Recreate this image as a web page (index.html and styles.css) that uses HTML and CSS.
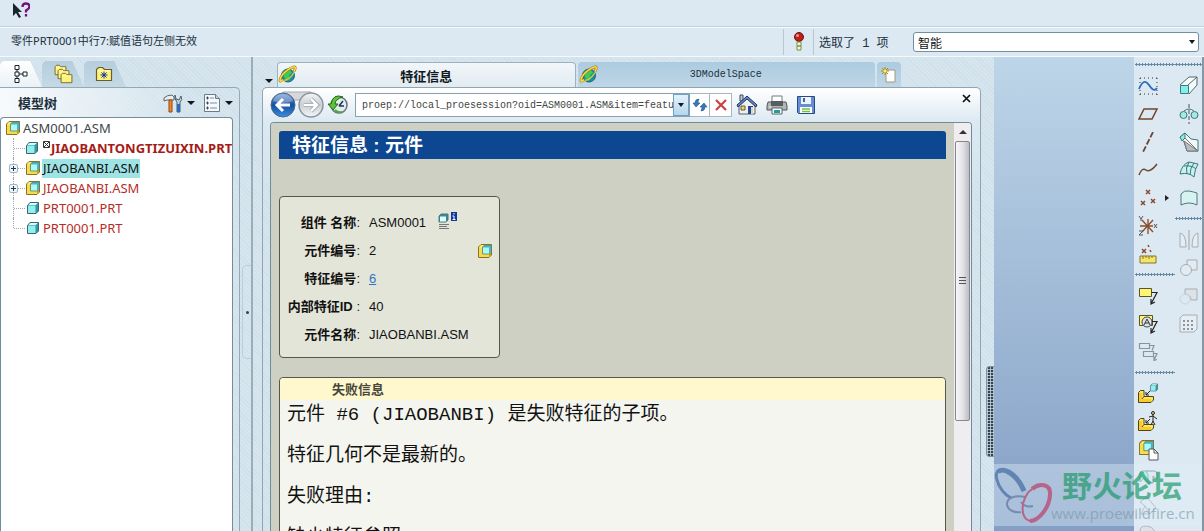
FILE: index.html
```html
<!DOCTYPE html>
<html lang="zh-CN">
<head>
<meta charset="utf-8">
<title>特征信息</title>
<link rel="stylesheet" href="styles.css">
</head>
<body>
<svg class="defs" aria-hidden="true">
  <symbol id="part" viewBox="0 0 14 14"><path d="M1.5 4.5 4 1.5h8.500v8.500L10 12.500H1.500z" fill="#2f97a5" stroke="#43636c"/><path d="M2 4.500h7.500V12H2z" fill="#8ff0ee"/><path d="M2.500 4 4.300 2h7.500L9.700 4z" fill="#d3ffff"/></symbol>
  <symbol id="asm" viewBox="0 0 16 16"><path d="M1.500 4 4 1.500h10.500V12L12 14.500H1.500z" fill="#ffef7a" stroke="#8c7220"/><path d="M2 4.500h3.500v6.500h6.500v3H2z" fill="#f4dc4c"/><path d="M5.500 4 7.500 2h7v6.500l-2 2.500h-7z" fill="#48b6c8" stroke="#6a774a" stroke-width=".7"/><path d="M6 4.500h6v6H6z" fill="#aafafa"/><path d="M12 14V11l2-2v3z" fill="#c09d28"/></symbol>
  <symbol id="globe" viewBox="0 0 20 20"><circle cx="10" cy="10.500" r="6.500" fill="#1c8fa2" stroke="#176573"/><path d="M6 7q3-3 6-2l2 3-3 2 1 4-3 2-3-4z" fill="#3fca55"/><path d="M5 14.500C0 20 1 11 9 5.500S19 1 16 6.500" fill="none" stroke="#9d7b13" stroke-width="2.600"/><path d="M5 14.500C0 20 1 11 9 5.500S19 1 16 6.500" fill="none" stroke="#ffdf45" stroke-width="1.500"/><path d="M6 15.500q6-1 10-8" fill="none" stroke="#e9c63c" stroke-width="1.300"/></symbol>
  <symbol id="folder" viewBox="0 0 18 16"><path d="M1.500 14.500V3.500l2-2h4l2 2h7v11z" fill="#fff27a" stroke="#675f2b" stroke-width="1.200"/><path d="M2.500 5h13" stroke="#fffbd0"/></symbol>
  <symbol id="elbow" viewBox="0 0 20 20"><path d="M1.500 8.500 3.500 6.500h3.500v6h9.500v3.500l-2.500 2.500H1.500z" fill="#ffe35a" stroke="#4f4414"/><path d="M2 9h3v6h9v3H2z" fill="#f7cb2d"/><path d="m5 15 2-2.500" stroke="#5b4c14"/></symbol>
</svg>

<header class="help-bar"><button class="plain" aria-label="上下文帮助"><svg width="20" height="20"><path d="M3 2v13l3-3 3 5 2-1-3-5h4z" fill="#17242b"/><path d="M12.500 6q0-3.500 3.500-3.500t3.500 3q0 2-3.500 4v2M16 13v2.500" fill="none" stroke="#74127b" stroke-width="2.300"/></svg></button></header>

<section class="message-bar">
  <p class="message">零件PRT0001中行7:赋值语句左侧无效</p>
  <span class="light"><svg width="12" height="20"><circle cx="6" cy="5" r="4.500" fill="#bd2018" stroke="#6c140f"/><circle cx="4.500" cy="3.500" r="1.500" fill="#f4948c"/><path d="M4 10h4v4H4zM4 14h4v4H4z" fill="#f2f5cf" stroke="#769448"/></svg></span>
  <label class="picked" for="filter">选取了 1 项</label>
  <div class="filter"><select id="filter"><option>智能</option></select><i class="down"></i></div>
</section>

<main class="workspace">
  <aside class="navigator">
    <nav class="nav-tabs">
      <button class="nav-tab active" aria-label="模型树"><svg width="20" height="20"><path d="M4 1.500h4v4H4zM4 8h4v4H4zM4 14.500h4v4H4zM12 8h4v4h-4zM6 5.500V8m0 4v2.500M8 10h4" fill="#fff" stroke="#17202a"/></svg></button>
      <button class="nav-tab" aria-label="文件夹浏览器"><svg width="21" height="20"><use href="#folder" x="1" y="0" width="13" height="12"/><use href="#folder" x="4" y="4" width="13" height="12"/><use href="#folder" x="7" y="8" width="13" height="12"/></svg></button>
      <button class="nav-tab" aria-label="收藏夹"><svg width="19" height="17"><use href="#folder" width="18" height="16"/><path d="M9 5.500v7M5.500 9h7M6.500 6.500l5 5m0-5-5 5" stroke="#17349c"/></svg></button>
    </nav>
    <div class="nav-panel">
      <div class="nav-head">
        <h2>模型树</h2>
        <button class="plain menu" aria-label="设置"><svg width="20" height="20"><path d="M1 5q3-3 8-3l2 2v3H4L1 8z" fill="#e8edf0" stroke="#5a666c"/><path d="M6 7h3v12H6z" fill="#f08a29" stroke="#934312"/><path d="m12 2 1 4 3 1 2-4q2 4-1 6v10h-3V9q-3-3-2-7" fill="#cbd8df" stroke="#4a5c68"/><path d="M14 11h3v8h-3z" fill="#286cc0"/></svg><i class="down"></i></button>
        <button class="plain menu" aria-label="显示"><svg width="18" height="20"><path d="M1.500 1.500h11l4 4v13h-15z" fill="#f6f9fb" stroke="#6c7b86"/><path d="M12.500 1.500v4h4" fill="#bdd1db" stroke="#6c7b86"/><path d="M7 5h4M7 10h7M7 15h7" stroke="#7590a5"/><path d="M4 4h1v2H4zM4 9h1v2H4zM4 14h1v2H4z" stroke="#405465"/></svg><i class="down"></i></button>
      </div>
      <ul class="tree">
        <li class="root"><svg width="16" height="16"><use href="#asm"/></svg><span>ASM0001.ASM</span></li>
        <li class="failed"><i class="branch"></i><svg width="14" height="14"><use href="#part"/></svg><svg class="mark" width="8" height="8"><path d="M.5.500h6v6h-6zM1 1l5 5m0-5-5 5" fill="none" stroke="#333"/></svg><span>JIAOBANTONGTIZUIXIN.PRT</span></li>
        <li class="picked-row"><i class="branch"></i><button class="plus" aria-label="展开"></button><svg width="16" height="16"><use href="#asm"/></svg><span>JIAOBANBI.ASM</span></li>
        <li><i class="branch"></i><button class="plus" aria-label="展开"></button><svg width="16" height="16"><use href="#asm"/></svg><span>JIAOBANBI.ASM</span></li>
        <li><i class="branch"></i><svg width="16" height="14"><use href="#part"/></svg><span>PRT0001.PRT</span></li>
        <li class="last"><i class="branch"></i><svg width="16" height="14"><use href="#part"/></svg><span>PRT0001.PRT</span></li>
      </ul>
    </div>
    <div class="grip"></div>
  </aside>

  <section class="browser">
    <div class="tabs">
      <button class="plain tab-menu" aria-label="选项卡"><i class="down"></i></button>
      <button class="tab active"><svg width="20" height="20"><use href="#globe"/></svg><span>特征信息</span></button>
      <button class="tab"><svg width="20" height="20"><use href="#globe"/></svg><span class="mono">3DModelSpace</span></button>
      <button class="tab new" aria-label="新选项卡"><svg width="16" height="16"><path d="M5 3h9v12H5z" fill="#fff" stroke="#9c9a80"/><path d="M4 0v8M0 4h8M1 1l6 6m0-6L1 7" stroke="#b18909"/><circle cx="4" cy="4" r="1.500" fill="#ffee60"/></svg></button>
    </div>
    <div class="page-shell">
      <div class="address-row">
        <button class="plain" aria-label="后退和前进"><svg width="56" height="28"><path d="M14 1h28v8H14z" fill="#d4d8da" stroke="#a4abb0"/><circle cx="14" cy="14" r="12" fill="url(#blue)" stroke="#53698a"/><circle cx="42" cy="14" r="12" fill="url(#grey)" stroke="#8c959f" stroke-width="1.500"/><path d="M4 10q2-7 10-7t10 7q-9 4-20 0" fill="#fff" opacity=".3"/><path d="m14 8-6 6 6 6M9 14h12" fill="none" stroke="#fff" stroke-width="3"/><path d="m42 8 6 6-6 6M35 14h12" fill="none" stroke="#929ba2" stroke-width="4"/><path d="m42 8 6 6-6 6M35 14h12" fill="none" stroke="#fff" stroke-width="2.500"/><defs><linearGradient id="blue" x2="0" y2="1"><stop stop-color="#719bd5"/><stop offset=".5" stop-color="#164f9f"/><stop offset="1" stop-color="#398de0"/></linearGradient><linearGradient id="grey" x2="0" y2="1"><stop stop-color="#f6f6f6"/><stop offset=".5" stop-color="#c8ced2"/><stop offset="1" stop-color="#f6f8f9"/></linearGradient></defs></svg></button>
        <button class="plain" aria-label="历史记录"><svg width="22" height="22"><circle cx="12" cy="11" r="8" fill="#e3ebef" stroke="#66737b" stroke-width="1.500"/><path d="m12 12 4-5M12 12h5" stroke="#17394a" stroke-width="1.500"/><path d="M16 3Q6-1 4 10H1l5 6 5-6H8q0-5 8-7" fill="#5cc535" stroke="#21681f"/><path d="M8 16q3 3 7 2" fill="none" stroke="#4ca93b" stroke-width="2"/></svg></button>
        <form class="address"><input aria-label="地址" value="proep://local_proesession?oid=ASM0001.ASM&amp;item=featureinfo"><button type="button" class="drop" aria-label="地址列表"><i class="down"></i></button></form>
        <button class="box" aria-label="刷新"><svg width="16" height="16"><path d="M7 2Q3 2 3 6H1l3 4 4-4H6q0-2 1-4M9 14q4 0 4-4h2l-3-4-4 4h2q0 2-1 4" fill="#3878bb" stroke="#25588d" stroke-width=".6"/></svg></button>
        <button class="box" aria-label="停止"><svg width="14" height="14"><path d="m2 2 10 10M12 2 2 12" stroke="#c74346" stroke-width="2.200"/></svg></button>
        <span class="tools">
          <button class="plain" aria-label="主页"><svg width="22" height="22"><path d="M4 1h3v6H4z" fill="#c2cbd4" stroke="#344a78"/><path d="M3 11 11 4l8 7v9H3z" fill="#eff0ed" stroke="#59636d"/><path d="m1 11 10-9 10 9-1 2-9-8-9 8z" fill="#6884c4" stroke="#20345f"/><path d="M12 12h5v8h-5z" fill="#21479a"/><path d="M5 12h4v4H5z" fill="#ecd66a" stroke="#5e5a40"/><path d="M15 13h2v7h-2z" fill="#e1d5ae"/></svg></button>
          <button class="plain" aria-label="打印"><svg width="22" height="22"><path d="M6 2h10v8H6z" fill="#fff" stroke="#747c80"/><path d="M2 8h18l1 4v4H1v-4z" fill="#b4b6b4" stroke="#505659"/><path d="M5 7h12v5H5z" fill="#575c60"/><path d="M6 14h10v6H6z" fill="#fff" stroke="#4a6668"/><path d="M8 16h6v3H8z" fill="#249c9f"/><path d="M3 13h2" stroke="#eee"/></svg></button>
          <button class="plain" aria-label="保存"><svg width="20" height="20"><path d="M1.500 1.500h17v17h-16l-1-1z" fill="#648fd4" stroke="#284983"/><path d="M5 2h10v7H5z" fill="#edf3fa"/><path d="M7 3h2v4H7z" fill="#4265a0"/><path d="M4 12h12v6H4z" fill="#fff"/><path d="M6 14h8m-8 2.500h8" stroke="#75be40" stroke-width="1.500"/></svg></button>
        </span>
        <button class="plain close" aria-label="关闭"><svg width="10" height="10"><path d="m1 1 7 7m0-7L1 8" stroke="#111" stroke-width="1.700"/></svg></button>
      </div>
      <div class="viewport">
        <article class="document">
          <h1>特征信息 : 元件</h1>
          <div class="info">
            <table>
              <tr><th>组件 名称<b>:</b></th><td>ASM0001 <svg class="info-icon" width="20" height="20"><path d="M1 5 3 3h7v6l-2 2H1z" fill="#408694" stroke="#51767e"/><path d="M2 5.500h6v5H2z" fill="#dcffff"/><path d="M1 13.500h10M1 15.500h8M1 17.500h10" stroke="#777"/><path d="M13 1h6v9h-6z" fill="#12389a"/><path d="M16 2v1.500M14.500 5H16v3.500m-1.500 0h3" fill="none" stroke="#fff"/></svg></td></tr>
              <tr><th>元件编号<b>:</b></th><td><span class="with-icon">2<svg width="16" height="16"><use href="#asm"/></svg></span></td></tr>
              <tr><th>特征编号<b>:</b></th><td><a href="#feature">6</a></td></tr>
              <tr><th>内部特征ID <b>:</b></th><td>40</td></tr>
              <tr><th>元件名称<b>:</b></th><td>JIAOBANBI.ASM</td></tr>
            </table>
          </div>
          <section class="failure" id="feature">
            <h2>失败信息</h2>
            <p>元件 #6 (JIAOBANBI) 是失败特征的子项。</p>
            <p>特征几何不是最新的。</p>
            <p>失败理由:</p>
            <p>缺少特征参照。</p>
          </section>
        </article>
        <div class="scroll"><i class="up"></i><div class="thumb"><i></i></div></div>
      </div>
    </div>
    <div class="dot-grip"></div>
  </section>

  <section class="canvas"></section>

  <aside class="toolbars">
    <div class="col">
      <hr>
      <button class="plain" aria-label="草绘"><svg width="20" height="20"><path d="M2 2h18M2 18h18M2 2v18M19 2v18" fill="none" stroke="#333" stroke-dasharray="1 3"/><path d="M1 13q5-12 10-4t8 3" fill="none" stroke="#2a6db9" stroke-width="1.800"/></svg></button>
      <button class="plain" aria-label="平面"><svg width="20" height="20"><path d="M6 5h13l-5 10H1z" fill="none" stroke="#70452e" stroke-width="1.500"/></svg></button>
      <button class="plain" aria-label="轴"><svg width="20" height="20"><path d="M15 0 5 20" stroke="#70452e" stroke-width="1.800" stroke-dasharray="6 2"/></svg></button>
      <button class="plain" aria-label="曲线"><svg width="20" height="20"><path d="M1 15q3-8 7-5t11-6" fill="none" stroke="#70452e" stroke-width="1.500"/></svg></button>
      <button class="plain" aria-label="点"><svg width="20" height="20"><path d="m8 2 4 4m0-4L8 6M3 13l4 4m0-4-4 4m10-6 4 4m0-4-4 4" stroke="#8a4b28" stroke-width="1.500"/></svg><i class="fly"></i></button>
      <button class="plain" aria-label="坐标系"><svg width="20" height="20"><path d="M10 3v15M2 10h13M4 4l11 12M15 4 4 16" stroke="#8a4b28" stroke-width="1.300"/><path d="m1 0 2 3 2-3M3 3v2M16 8l3 4m0-4-3 4M1 15h4l-4 4h4" fill="none" stroke="#555"/></svg></button>
      <button class="plain" aria-label="分析"><svg width="20" height="20"><path d="m4 5 4 4m0-4L4 9m6-8 1 2m1 3 1 2" stroke="#8a4b28" stroke-width="1.500"/><path d="M2 12h16v7H2z" fill="#f5e567" stroke="#81752e"/><path d="M5 12v3m3-3v2m3-2v3m3-3v2" stroke="#81752e"/></svg></button>
      <hr>
      <button class="plain" aria-label="注释"><svg width="20" height="20"><path d="M1.500 2.500h12v8h-12z" fill="#fff477" stroke="#575722"/><path d="M14 6.500h5L13 18m0-5v5l4-2" fill="none" stroke="#222" stroke-width="1.200"/></svg></button>
      <button class="plain" aria-label="传播注释"><svg width="20" height="20"><path d="M1.500 1.500h13v10h-13z" fill="#fff477" stroke="#575722"/><circle cx="9" cy="8" r="5" fill="#dce4e8" stroke="#454545"/><path d="m6 11 3-6 3 6M7 9h4" fill="none" stroke="#333"/><path d="M14 7.500h5L13 19m0-5v5l4-2" fill="none" stroke="#222" stroke-width="1.200"/></svg></button>
      <button class="plain" aria-label="注释元素"><svg width="20" height="20"><path d="M1.500 1.500h10v5h-10zM5.500 9.500h10v5h-10zM11 3.500h5l-2 5m1 3h4l-3 7m0-4v4l3-1" fill="none" stroke="#89949b" stroke-width="1.200"/></svg></button>
      <hr>
      <button class="plain" aria-label="装配"><svg width="22" height="22"><use href="#elbow" y="1" width="20" height="20"/><use href="#part" x="12" y="0" width="10" height="9"/><path d="m13 8-4 4m0-3v3h3" fill="none" stroke="#222"/></svg></button>
      <button class="plain" aria-label="人体模型"><svg width="22" height="22"><use href="#elbow" y="1" width="20" height="20"/><path d="M16 3v7l-2 4m2-4 2 4m-6-8 4-1 4 3m-7 0-4 4m0-3v3h3" fill="none" stroke="#222"/><circle cx="16" cy="2" r="1.500" fill="#ecd66a" stroke="#222"/></svg></button>
      <button class="plain" aria-label="创建元件"><svg width="22" height="22"><use href="#asm" x="0" y="0" width="19" height="17"/><path d="M12 10h5l4 4v7h-9z" fill="#fff" stroke="#555"/><path d="M17 10v4h4" fill="none" stroke="#555"/></svg></button>
      <button class="plain" aria-label="孔"><svg width="20" height="20"><path d="M2 5 4 3h4l2 4v8L6 10l-4 4z" fill="#a6f3e3" stroke="#679d95"/><path d="M8 3h9l2 2v6l-4-3v7h-5" fill="none" stroke="#667f88"/></svg></button>
      <button class="plain faded" aria-label="拔模"><svg width="20" height="20"><path d="M2 6 9 1l9 11-6 6H3l4-8 5 8M2 6l5 4" fill="none" stroke="#555"/></svg></button>
      <button class="plain faded" aria-label="倒圆角"><svg width="20" height="20"><path d="M2 7q0-5 6-5t9 6H6v8" fill="#ddd" stroke="#777"/></svg></button>
    </div>
    <div class="col">
      <hr>
      <button class="plain" aria-label="拉伸"><svg width="20" height="20"><path d="m1 9 9-8h8v8l-8 9M9 9l9-8" fill="#f5fafa" stroke="#53676a"/><path d="M1.500 9.500h8v8h-8z" fill="#85eee7" stroke="#347f83"/></svg></button>
      <button class="plain" aria-label="旋转"><svg width="20" height="20"><circle cx="4.500" cy="11" r="3.500" fill="#a4ebe7" stroke="#3f777b"/><circle cx="15.500" cy="11" r="3.500" fill="#a4ebe7" stroke="#3f777b"/><path d="M10 0v20" stroke="#555" stroke-dasharray="4 2"/><path d="M5 7q5-4 10 0" fill="none" stroke="#3f777b"/></svg></button>
      <button class="plain" aria-label="扫描混合"><svg width="20" height="20"><path d="m1 5 5-4 6 6 7 1v11H8l-3-9z" fill="#f2f7f8" stroke="#3f777b"/><path d="m1 5 5-4v5L3 9z" fill="#8defe6" stroke="#3f777b"/><path d="m5 9 14 10H8z" fill="#b9bdbf" stroke="#777"/><path d="m6 6 13 13" stroke="#777"/></svg></button>
      <button class="plain" aria-label="边界混合"><svg width="20" height="20"><path d="M1 14Q3 4 10 2l9 2q-3 4-4 13-5-5-14-3M5 6q8-1 12 3M10 2Q6 8 8 14m7-11q-4 5-4 12" fill="#c3f4f0" stroke="#3f777b"/></svg></button>
      <button class="plain" aria-label="填充"><svg width="20" height="20"><path d="M2 6q3-4 8-3t8 2v12q-8-4-16 0z" fill="#d6f3f2" stroke="#53777a"/></svg></button>
      <hr>
      <button class="plain faded" aria-label="镜像"><svg width="20" height="20"><path d="M1 3q6 1 6 14H1zM19 3q-6 1-6 14h6z" fill="#f4f4f4" stroke="#666"/><path d="M10 0v20" stroke="#555"/></svg></button>
      <button class="plain faded" aria-label="合并"><svg width="20" height="20"><path d="M8 2h10v10H8z" fill="#eee" stroke="#666"/><circle cx="7" cy="12" r="5.500" fill="#eee" stroke="#666"/></svg></button>
      <button class="plain faded" aria-label="修剪"><svg width="20" height="20"><path d="M6 3h12v11h-6q0-5-6-6z" fill="#ddd" stroke="#666"/><circle cx="6" cy="13" r="5" fill="none" stroke="#bbb"/></svg></button>
      <button class="plain faded" aria-label="阵列"><svg width="20" height="20"><path d="M1 4 4 1h14v14l-3 3H1z" fill="#f5f5f5" stroke="#666"/><path d="M4 7h12M4 11h12M4 15h12" stroke="#333" stroke-width="2" stroke-dasharray="2 2"/></svg></button>
    </div>
  </aside>

  <div class="watermark"><svg width="60" height="62"><path d="M30 27C20 2-2 0 3 16c2 8 8 15 14 18" fill="none" stroke="#38659c" stroke-width="3"/><path d="M30 27C22 8 8 3 4 8" fill="none" stroke="#38659c" stroke-width="5"/><path d="M31 33c-8-2-19 0-18 8 1 5 7 8 14 7" fill="none" stroke="#5b7099" stroke-width="2"/><path d="M27 38q4 6 12 4" fill="none" stroke="#5b7099" stroke-width="2"/><path d="M38 25c7-6 19-6 18 6-1 14-12 26-20 26" fill="none" stroke="#bc3560" stroke-width="4"/><path d="M38 25c-11 7-14 32 0 32" fill="none" stroke="#bc3560" stroke-width="2"/></svg><div><strong>野火论坛</strong><span>www.proewildfire.cn</span></div></div>
</main>
</body>
</html>
```
FILE: styles.css
```css
* { box-sizing: border-box; }
body {
  margin: 0; height: 100vh; overflow: hidden; display: flex; flex-direction: column;
  background: #dce9f2; color: #20303c;
  font: 12px "Noto Sans", "Noto Sans CJK SC", sans-serif;
}
h1, h2, p, ul { margin: 0; padding: 0; }
button { font: inherit; color: inherit; padding: 0; border: 0; background: none; }
svg { display: block; flex: none; }
.defs { position: absolute; width: 0; height: 0; }
.plain { display: flex; align-items: center; justify-content: center; }
.down { border: 4px solid transparent; border-top-color: #101820; border-bottom: 0; }

.help-bar { flex: none; height: 28px; padding: 1px 10px 0; border-bottom: 1px solid #f6fafc; box-shadow: 0 -1px #c3d1da inset; }
.message-bar { flex: none; height: 29px; display: flex; align-items: center; border-bottom: 1px solid #f4f9fc; }
.message { flex: 1; padding: 0 0 4px 11px; font-size: 11px; }
.light { width: 31px; height: 26px; display: grid; place-items: center; border: solid #b7c8d3; border-width: 0 1px; }
.picked { width: 99px; padding-left: 5px; font: 12px "Liberation Mono", "Noto Sans CJK SC", monospace; }
.filter { position: relative; width: 286px; margin-right: 5px; }
.filter select { appearance: none; display: block; width: 100%; height: 20px; padding: 0 4px; border: 1px solid #71909f; border-radius: 3px; background: #fff; color: #111; font: 12px "Noto Sans CJK SC", sans-serif; }
.filter .down { position: absolute; right: 4px; top: 8px; border-width: 4px 3px 0; }

.workspace { position: relative; flex: 1; min-height: 0; overflow: hidden; display: grid; grid-template-columns: 253px minmax(0, 1fr) 140px 70px; }
.navigator, .browser { background: repeating-linear-gradient(45deg, #d0e0ea 0 1px, #d6e5ee 1px 3px); }

.navigator { position: relative; display: flex; flex-direction: column; padding: 4px 11px 0 0; border-right: 2px solid #9badb9; }
.nav-tabs { display: flex; height: 26px; }
.nav-tab { width: 42px; display: grid; place-items: center start; padding-left: 11px; border-radius: 5px 0 0 0; background: linear-gradient(#b5cddd, #c5d9e6); clip-path: polygon(0 0, 72% 0, 100% 100%, 0 100%); }
.nav-tab.active { background: linear-gradient(#fff, #eaf1f6); }
.nav-panel { flex: 1; min-height: 0; display: flex; flex-direction: column; padding: 0 6px 0 0; border: solid #94a8b5; border-width: 1px 1px 0 0; border-radius: 0 5px 0 0; background: linear-gradient(90deg, #f7fafc, #dce8ef00 80%); }
.nav-head { height: 29px; display: flex; align-items: center; gap: 8px; padding-left: 18px; }
.nav-head h2 { flex: 1; font: bold 13px "Noto Sans CJK SC", sans-serif; }
.menu { gap: 4px; }
.tree { flex: 1; padding: 0 0 0 4px; border: 1px solid #718c9b; border-bottom: 0; border-radius: 4px 4px 0 0; background: #fff; list-style: none; color: #b62d28; font-size: 13px; white-space: nowrap; }
.tree li { position: relative; display: flex; align-items: center; height: 20px; padding-left: 20px; }
.tree .root { padding: 0; color: #3e464b; }
.tree span { line-height: 19px; padding: 0 1px; }
.tree svg + span { margin-left: 1px; }
.mark { align-self: flex-start; margin: 3px 0 0 4px; }
.failed { font-weight: bold; color: #a51c16; }
.tree .failed span { margin: 0; padding: 0; }
.picked-row span { background: #9ee4e5; color: #111; }
.branch { position: absolute; left: 8px; top: 0; width: 12px; height: 20px; border-left: 1px dotted #a0a7ab; }
.branch::after { content: ""; position: absolute; top: 10px; width: 11px; border-top: 1px dotted #a0a7ab; }
.last .branch { height: 10px; }
.plus { position: absolute; left: 4px; top: 6px; width: 9px; height: 9px; border: 1px solid #a0b6c7; border-radius: 2px; background: linear-gradient(#203b4b, #203b4b) center / 5px 1px no-repeat, linear-gradient(#203b4b, #203b4b) center / 1px 5px no-repeat, #eef5f9; }
.grip { position: absolute; right: 0; top: 208px; width: 9px; height: 94px; border: 1px solid #bccdda; border-right: 0; border-radius: 5px 0 0 5px; }
.grip::after { content: ""; position: absolute; left: 3px; top: 45px; width: 3px; height: 3px; border-radius: 2px; background: #33414c; }

.browser { position: relative; display: flex; flex-direction: column; padding: 5px 13px 0 9px; }
.tabs { display: flex; gap: 2px; height: 25px; padding-right: 80px; }
.tab-menu { width: 13px; align-items: flex-end; padding-bottom: 4px; }
.tab { flex: 1; display: flex; align-items: center; padding-left: 1px; border-radius: 4px 4px 0 0; background: linear-gradient(#accbe0, #bfd6e6); }
.tab span { flex: 1; text-align: center; }
.tab.active { padding-left: 0; border: 1px solid #9cb2c1; border-bottom: 0; background: linear-gradient(#f1f6f9, #e1ebf1); font: bold 13px "Noto Sans CJK SC", sans-serif; color: #101820; }
.tab.active span { padding-right: 20px; }
.tab .mono { padding-right: 22px; font: 10px "Liberation Mono", monospace; }
.tab.new { flex: none; width: 24px; padding-left: 4px; }
.page-shell { flex: 1; min-height: 0; display: flex; flex-direction: column; padding: 0 8px 0 7px; border: 1px solid #8ea5b3; border-bottom: 0; border-radius: 5px 5px 0 0; background: linear-gradient(#fff, #dce9f2 34px, #d8e6ef00 100px); }
.address-row { height: 34px; flex: none; display: flex; align-items: center; }
.address-row > .plain:nth-child(2) { margin: 0 6px 0 2px; }
.address-row > .plain:first-child { margin-left: -1px; }
.address { display: flex; width: 335px; height: 24px; border: 1px solid #8aa0ad; background: #fff; }
.address input { flex: 1; min-width: 0; padding: 0 0 0 6px; border: 0; background: none; color: #444; font: 10px "Liberation Mono", monospace; }
.drop { width: 16px; display: grid; place-items: center; border: 1px solid #6da2c4; background: linear-gradient(#e4f2fb, #b4d6ed); }
.drop .down { border-width: 4px 3px 0; }
.box { width: 20px; height: 24px; display: grid; place-items: center; border: solid #a6b7c2; border-width: 1px 1px 1px 0; background: #fff; }
.box + .box { width: 22px; }
.tools { display: flex; align-items: center; gap: 8px; padding-left: 4px; }
.close { margin: 0 0 12px auto; }

.viewport { flex: 1; min-height: 0; display: flex; border: 1px solid #718c98; border-bottom: 0; border-radius: 4px 4px 0 0; overflow: hidden; }
.document { flex: 1; min-width: 0; padding: 8px 8px 0; background: #ced0c3; font-family: "Liberation Sans", "Noto Sans CJK SC", sans-serif; color: #111; }
.document h1 { height: 28px; line-height: 30px; padding-left: 13px; border-radius: 3px 3px 0 0; background: #0d4791; color: #fff; font-size: 19px; }
.info { width: 221px; margin: 37px 0 19px; padding: 12px 0 8px; border: 1px solid #55574d; border-radius: 4px; background: #e3e5d9; font-size: 13px; }
.info table { width: 100%; border-collapse: collapse; }
.info tr { height: 28px; }
.info th { width: 80px; padding: 0; text-align: right; white-space: nowrap; line-height: 20px; }
.info b { font-weight: normal; }
.info td { padding: 0 6px 0 9px; line-height: 20px; }
.info-icon { display: inline-block; vertical-align: middle; margin: -6px 0 0 8px; }
.with-icon { display: flex; align-items: center; justify-content: space-between; }
.info a { color: #3174c2; }
.failure { min-height: 300px; border: 1px solid #55574d; border-radius: 4px 4px 0 0; background: #f4f5ee; }
.failure h2 { height: 22px; padding-left: 52px; line-height: 24px; background: #fff7cd; color: #47473c; font-size: 13px; border-radius: 4px 4px 0 0; margin-bottom: -5px; }
.failure p { padding-left: 7px; font: 19px/41px "Liberation Mono", "Noto Sans CJK SC", monospace; white-space: nowrap; }
.scroll { width: 17px; flex: none; display: flex; flex-direction: column; align-items: center; background: #efedf0; }
.up { margin: 7px 0; border: 4px solid transparent; border-bottom-color: #333; border-top: 0; }
.thumb { width: 15px; height: 280px; flex: none; display: grid; place-items: center; border: 1px solid #85888e; border-radius: 2px; background: linear-gradient(90deg, #f6f6f8, #e4e4e8 50%, #bcbcc4); }
.thumb i { width: 7px; height: 8px; background: repeating-linear-gradient(#555 0 1px, transparent 1px 3px); }
.dot-grip { position: absolute; right: 0; top: 309px; width: 8px; height: 91px; border: 1px solid #8294a2; border-right: 0; border-radius: 4px 0 0 4px; background: radial-gradient(circle at 1px 1px, #334450 40%, transparent 60%) 1px 0 / 3px 3px #c5d6e1; }

.canvas { background: linear-gradient(#bdd5e8, #738fbb); }
.toolbars { display: flex; border-right: 2px solid #8597a5; background: #dce9f2; }
.col { width: 41px; overflow: hidden; }
.col + .col { width: 27px; }
.col .plain { width: 27px; height: 28px; position: relative; }
.col hr { height: 3px; margin: 5px 0 6px 1px; border: 0; background: radial-gradient(#6889a0 50%, transparent 60%) 0 0 / 3px 3px; }
.col hr:first-child { margin-top: 6px; }
.col + .col hr { margin-left: 0; }
.faded { opacity: .45; }
.fly { position: absolute; left: 31px; border: 3px solid transparent; border-left: 4px solid #222; border-right: 0; }

.watermark { position: absolute; right: 3px; bottom: 5px; width: 207px; height: 62px; display: flex; background: rgb(225 238 248 / 40%); pointer-events: none; }
.watermark > * { opacity: .65; }
.watermark div { display: flex; flex-direction: column; }
.watermark strong { padding-left: 8px; color: #159662; font: bold 30px/40px "Noto Sans CJK SC", sans-serif; }
.watermark span { margin-left: -3px; color: #7d9aac; font: 15px/18px "Open Sans", sans-serif; }
```
